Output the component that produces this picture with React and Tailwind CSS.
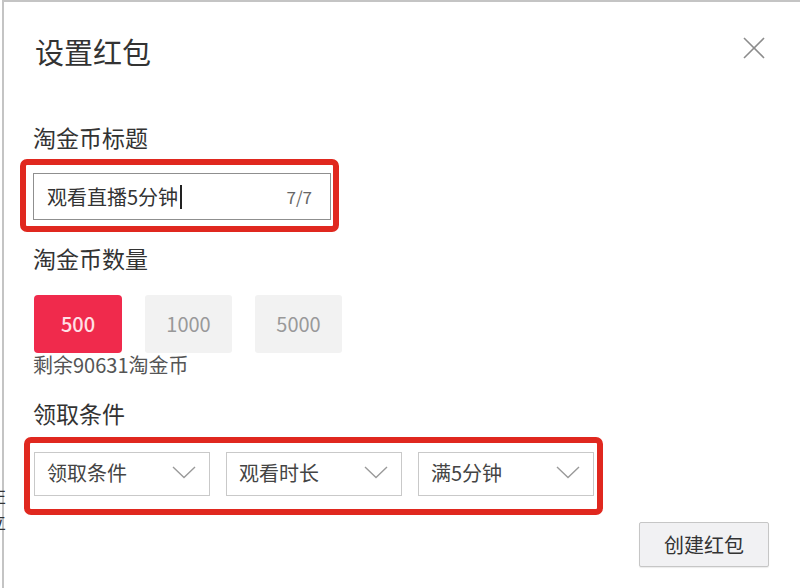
import React from "react";

const font = { fontFamily: '"Noto Sans CJK SC", "Noto Sans", sans-serif' };

function Chevron() {
  return (
    <svg width="24" height="13" viewBox="0 0 24 13" fill="none">
      <polyline points="1,1 12,11.5 23,1" stroke="#9a9a9a" strokeWidth="1.4" />
    </svg>
  );
}

function Select({ label }) {
  return (
    <div className="flex h-[44px] w-[176px] items-center justify-between border border-[#c9c9c9] bg-white pb-[3px] pl-[12px] pr-[13px]">
      <span className="text-[20px] leading-none text-[#444]">{label}</span>
      <Chevron />
    </div>
  );
}

export default function App() {
  return (
    <div className="relative h-[588px] w-[800px] overflow-hidden bg-white pl-[2px]" style={font}>
      <div className="absolute left-[-12px] top-[482px] flex flex-col text-[18px] leading-[26px] text-[#333]">
        <span>左</span>
        <span>立</span>
      </div>
      <div className="h-full border-l-2 border-t-2 border-[#c4c4c4] bg-white pl-[29px] pr-[31px]">
        <div className="flex items-start justify-between pt-[29px] pr-[4px]">
          <h1 className="ml-[2px] text-[29px] leading-[40px] text-[#333]">设置红包</h1>
          <svg width="22" height="22" viewBox="0 0 22 22" className="mt-[6px]">
            <line x1="1" y1="1" x2="21" y2="21" stroke="#8c8c8c" strokeWidth="1.6" />
            <line x1="21" y1="1" x2="1" y2="21" stroke="#8c8c8c" strokeWidth="1.6" />
          </svg>
        </div>

        <div className="mt-[50px] text-[23px] leading-[32px] text-[#333]">淘金币标题</div>

        <div className="-ml-[13px] mt-[6px] w-[319px] rounded-[7px] border-[6px] border-[#e0281f] pb-[6px] pl-[7px] pr-[2px] pt-[8px]">
          <div className="flex h-[47px] items-center justify-between border border-[#8f8f8f] bg-white pl-[13px] pr-[18px]">
            <div className="flex items-center">
              <span className="text-[20px] leading-none text-[#333]">观看直播5分钟</span>
              <span className="ml-[2px] h-[24px] w-[1.5px] bg-[#222]" />
            </div>
            <span className="text-[17px] leading-none text-[#666]">7/7</span>
          </div>
        </div>

        <div className="mt-[10px] text-[23px] leading-[32px] text-[#333]">淘金币数量</div>

        <div className="mt-[21px] flex gap-[23px] pl-[1px]">
          <div className="flex h-[58px] w-[88px] items-center justify-center rounded-[4px] bg-[#f02a4c] text-[20px] font-medium text-[#ffe0e6]">
            500
          </div>
          <div className="flex h-[58px] w-[87px] items-center justify-center rounded-[3px] bg-[#f2f2f2] text-[20px] text-[#999]">
            1000
          </div>
          <div className="flex h-[58px] w-[87px] items-center justify-center rounded-[3px] bg-[#f2f2f2] text-[20px] text-[#999]">
            5000
          </div>
        </div>

        <div className="text-[20px] leading-[24px] text-[#555]">剩余90631淘金币</div>

        <div className="mt-[20px] text-[23px] leading-[32px] text-[#333]">领取条件</div>

        <div className="-ml-[9px] mt-[8px] flex w-[579px] gap-[16px] rounded-[7px] border-[6px] border-[#e0281f] pb-[13px] pl-[4px] pt-[9px]">
          <Select label="领取条件" />
          <Select label="观看时长" />
          <Select label="满5分钟" />
        </div>

        <div className="mt-[7px] flex justify-end">
          <button className="flex h-[45px] w-[130px] items-center justify-center rounded-[2px] border border-[#c6c6c6] bg-[#f1f1f3] text-[20px] text-[#333] shadow-[0_1px_1px_rgba(0,0,0,0.08)]">
            创建红包
          </button>
        </div>
      </div>
    </div>
  );
}
